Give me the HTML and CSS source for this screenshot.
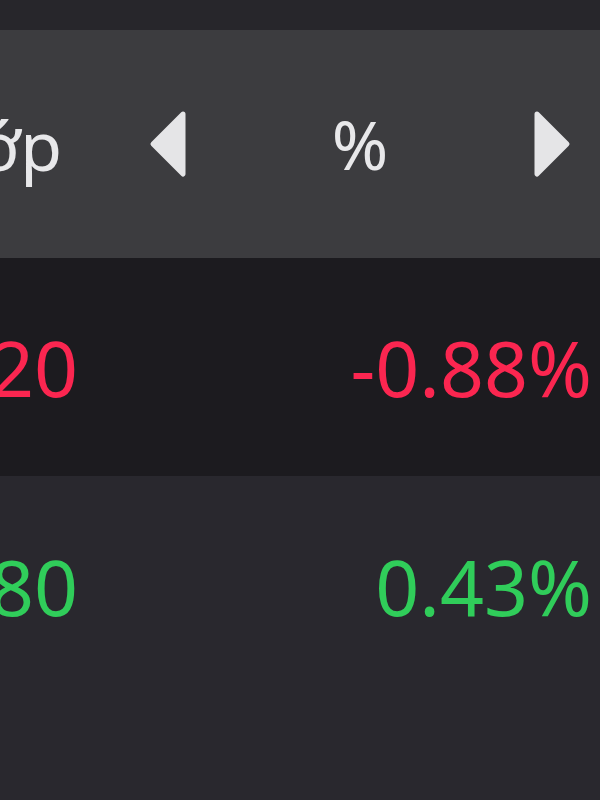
FILE: index.html
```html
<!DOCTYPE html>
<html lang="vi">
<head>
<meta charset="utf-8">
<link rel="stylesheet" href="styles.css">
</head>
<body>
<div class="screen">
  <div class="topbar"></div>
  <div class="row header">
    <div class="first"><span>Lớp</span></div>
    <div class="switcher">
      <svg class="arrow" width="40" height="70" viewBox="0 0 40 70"><path d="M35 5 L5 35 L35 65 Z" fill="#e5e5e7" stroke="#e5e5e7" stroke-width="5" stroke-linejoin="round"/></svg>
      <span class="label">%</span>
      <svg class="arrow" width="40" height="70" viewBox="0 0 40 70"><path d="M5 5 L35 35 L5 65 Z" fill="#e5e5e7" stroke="#e5e5e7" stroke-width="5" stroke-linejoin="round"/></svg>
    </div>
  </div>
  <div class="row data dark">
    <div class="first down"><span>1,420</span></div>
    <div class="value down">-0.88%</div>
  </div>
  <div class="row data light">
    <div class="first up"><span>2,380</span></div>
    <div class="value up">0.43%</div>
  </div>
</div>
</body>
</html>
```

FILE: styles.css
```css
html, body {
  margin: 0;
  padding: 0;
  background: #28272c;
  overflow: hidden;
}
.screen {
  width: 600px;
  height: 800px;
  display: flex;
  flex-direction: column;
  font-family: "Noto Sans", "Open Sans", sans-serif;
  overflow: hidden;
}
.topbar {
  height: 30px;
  background: #27262b;
  flex: none;
}
.row {
  display: grid;
  grid-template-columns: 80px 1fr;
  align-items: center;
  flex: none;
}
.first {
  display: flex;
  justify-content: flex-end;
  white-space: nowrap;
  overflow: visible;
}
.header {
  height: 228px;
  background: #3c3c3f;
  color: #e8e8ea;
  font-size: 68px;
}
.header .first {
  margin-right: 18px;
}
.switcher {
  display: flex;
  align-items: center;
  justify-content: space-between;
  padding-left: 68px;
  padding-right: 28px;
}
.arrow {
  display: block;
}
.label {
  line-height: 1;
}
.data {
  height: 218px;
  font-size: 77px;
}
.data .first {
  margin-right: 2px;
}
.dark {
  background: #1c1b1f;
}
.light {
  background: #29282e;
  height: 324px;
  align-items: start;
  padding-top: 58px;
  box-sizing: border-box;
}
.value {
  text-align: right;
  padding-right: 8px;
}
.down {
  color: #fb2650;
}
.up {
  color: #30cd5a;
}
```
